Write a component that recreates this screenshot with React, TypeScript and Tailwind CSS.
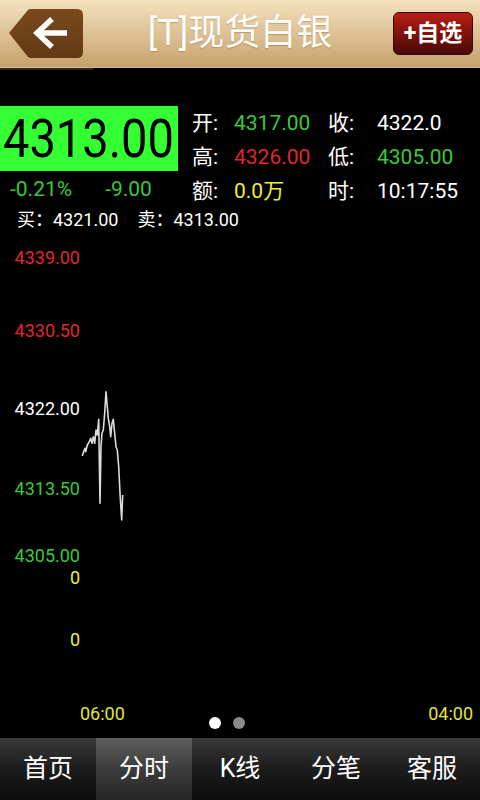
import React from "react"

const font = {fontFamily: 'Roboto, "Noto Sans CJK SC", sans-serif'}

// price trace, page coordinates
const trace = [
  [82.3, 456], [84, 450.7], [85, 448.3], [85.7, 451.7], [87.3, 445], [89.3, 441.7],
  [90.7, 438.3], [92, 443.3], [93.3, 436.7], [94.7, 443.3], [96, 430], [97.3, 435],
  [98.7, 419.3], [100, 503.3], [101, 446.7], [102, 433.3], [103.3, 430], [104.7, 413.3],
  [106, 391.7], [107.3, 406.7], [108.3, 418.3], [109.7, 426.7], [110.7, 436.7], [112, 423.3],
  [113.3, 419.3], [114.7, 433.3], [116, 446.7], [117.3, 450], [118.7, 466.7], [120, 493.3],
  [121.7, 520], [122.7, 495],
]

const tabs = ["首页", "分时", "K线", "分笔", "客服"]

const BackButton: React.FC = () => (
  <svg width="74" height="49" viewBox="0 0 74 49">
    <defs>
      <linearGradient id="back" x1="0" y1="0" x2="0" y2="1">
        <stop offset="0" stopColor="#7a4a1d" />
        <stop offset="1" stopColor="#623914" />
      </linearGradient>
    </defs>
    <path d="M0 24 L19 1 Q20 0 22 0 L68 0 Q74 0 74 6 L74 43 Q74 49 68 49 L22 49 Q20 49 19 48 Z" fill="url(#back)" />
    <path d="M58 24 L27 24 M43 10 L28 24 L43 38" stroke="#fff" strokeWidth="5.5" fill="none" strokeLinejoin="miter" />
  </svg>
)

const Quote: React.FC<{label: string; value: string; color: string}> = ({label, value, color}) => (
  <>
    <span className="text-white">{label}</span>
    <span className={color}>{value}</span>
  </>
)

const App: React.FC = () => {
  return (
    <div className="w-[480px] h-[800px] bg-black flex flex-col overflow-hidden" style={font}>
      <div className="h-[68px] shrink-0 grid grid-cols-[1fr_auto_1fr] items-center bg-gradient-to-b from-[#f5e1bd] to-[#c6a26d] border-b border-[#d9bb8a]">
        <div className="pl-[9px] flex">
          <BackButton />
        </div>
        <p className="text-white text-[36px] leading-none pb-[2px] [text-shadow:0_1px_1px_rgba(120,80,30,0.35)]">[T]现货白银</p>
        <div className="flex justify-end pr-[7px]">
          <div className="w-[80px] h-[43px] rounded-[6px] border border-[#3a0704] bg-gradient-to-b from-[#b81e13] to-[#4a0905] flex items-center justify-center">
            <span className="text-white font-bold text-[23px] leading-none">+自选</span>
          </div>
        </div>
      </div>
      <div className="h-[2px] w-[93px] bg-[#2a2a2a]" />

      <div className="flex mt-[36px] h-[102px]">
        <div className="w-[178px] flex flex-col">
          <div className="h-[66px] bg-[#33ff33] flex items-center pl-[3px]">
            <span className="text-black text-[47px] leading-none scale-y-[1.15] origin-center">4313.00</span>
          </div>
          <div className="h-[38px] flex items-center text-[21px] text-[#39c939]">
            <span className="ml-[10px]">-0.21%</span>
            <span className="ml-[33px]">-9.00</span>
          </div>
        </div>
        <div className="ml-[14px] grid grid-cols-[42px_94px_49px_auto] auto-rows-[34px] items-center text-[21px] leading-none">
          <Quote label="开:" value="4317.00" color="text-[#39c939]" />
          <Quote label="收:" value="4322.0" color="text-white" />
          <Quote label="高:" value="4326.00" color="text-[#e0262d]" />
          <Quote label="低:" value="4305.00" color="text-[#39c939]" />
          <Quote label="额:" value="0.0万" color="text-[#eeee3a]" />
          <Quote label="时:" value="10:17:55" color="text-white" />
        </div>
      </div>

      <div className="h-[24px] flex items-center pl-[17px] text-white text-[18px] leading-none">
        <span>买：4321.00</span>
        <span className="ml-[19px]">卖：4313.00</span>
      </div>

      <div className="relative flex-1 flex flex-col text-[18px] leading-[20px]">
        <svg className="absolute inset-0" width="480" height="506" viewBox="0 232 480 506">
          <polyline
            points={trace.map((p) => p.join(",")).join(" ")}
            fill="none"
            stroke="#dcdcdc"
            strokeWidth="1.6"
            strokeLinejoin="round"
          />
        </svg>
        <p className="w-[80px] text-right mt-[16px] text-[#e0262d]">4339.00</p>
        <p className="w-[80px] text-right mt-[53px] text-[#e0262d]">4330.50</p>
        <p className="w-[80px] text-right mt-[58px] text-white">4322.00</p>
        <p className="w-[80px] text-right mt-[60px] text-[#39c939]">4313.50</p>
        <p className="w-[80px] text-right mt-[47px] text-[#39c939]">4305.00</p>
        <p className="w-[80px] text-right mt-[2px] text-[#eeee3a]">0</p>
        <p className="w-[80px] text-right mt-[42px] text-[#eeee3a]">0</p>
        <div className="flex items-start mt-[54px] text-[18px] text-[#e4e43c]">
          <span className="ml-[80px]">06:00</span>
          <span className="ml-[84px] mt-[13px] w-3 h-3 rounded-full bg-white" />
          <span className="ml-[12px] mt-[13px] w-3 h-3 rounded-full bg-[#8a8a8a]" />
          <span className="ml-auto mr-[7px]">04:00</span>
        </div>
      </div>

      <div className="h-[62px] shrink-0 grid grid-cols-5 bg-gradient-to-b from-[#3a3a3a] via-[#1c1c1c] to-[#0c0c0c]">
        {tabs.map((t) => (
          <div
            key={t}
            className={
              t === "分时"
                ? "flex items-center justify-center text-white text-[25px] bg-gradient-to-b from-[#5e5e5e] via-[#3c3c3c] to-[#262626]"
                : "flex items-center justify-center text-white text-[25px]"
            }
          >
            {t}
          </div>
        ))}
      </div>
    </div>
  )
}

export default App
